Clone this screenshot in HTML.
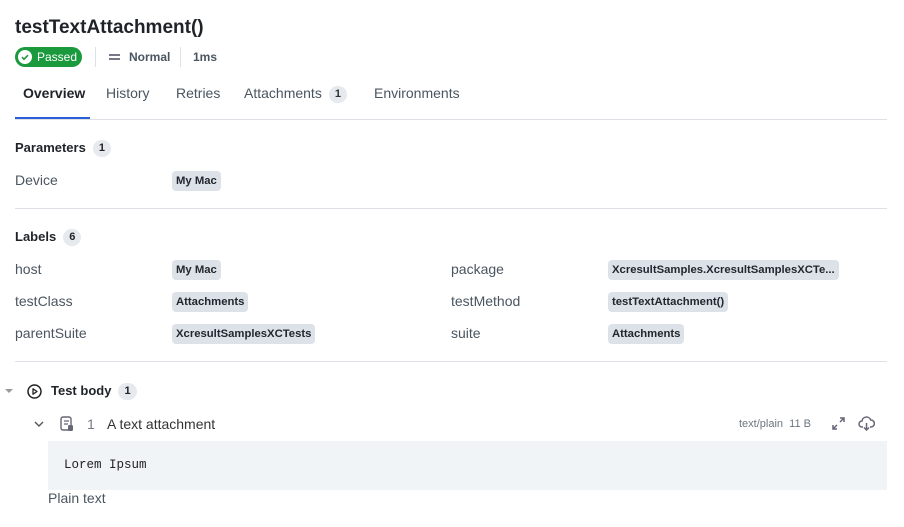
<!DOCTYPE html>
<html><head><style>
body{margin:0;width:904px;height:527px;background:#fff;font-family:"Liberation Sans",sans-serif;color:#1f2328;position:relative;overflow:hidden}
.a{position:absolute;white-space:nowrap}
.t{font-size:14px;color:#4a5560}
.tag{position:absolute;background:#dde1e8;border-radius:4px;font-size:11.3px;font-weight:bold;padding:0 4px;height:20px;line-height:20px;color:#22272e}
.hr{position:absolute;left:15px;width:872px;height:1px;background:#dde1e6}
.cnt{display:inline-block;background:#e6e9ee;border-radius:9px;font-size:11px;font-weight:bold;padding:0 6px;height:17px;line-height:17px;margin-left:7px;vertical-align:1px}
</style></head><body>
<div class="a" style="left:15px;top:17px;font-size:19px;font-weight:bold">testTextAttachment()</div>
<div class="a" style="left:15px;top:47px;height:20px;width:67px;background:#1a9a3c;border-radius:10px;color:#fff;font-size:12px;line-height:20px">
<svg style="position:absolute;left:3px;top:3px" width="14" height="14" viewBox="0 0 14 14"><circle cx="7" cy="7" r="7" fill="#fff"/><path d="M4 7.2l2 2 4-4" stroke="#1a9a3c" stroke-width="1.6" fill="none"/></svg>
<span style="position:absolute;left:22px">Passed</span></div>
<div class="a" style="left:95px;top:47px;width:1px;height:20px;background:#dde1e6"></div>
<div class="a" style="left:109px;top:54px;width:11px;height:2px;background:#778;box-shadow:0 4px 0 #778"></div>
<div class="a" style="left:129px;top:50px;font-size:12px;font-weight:bold;color:#4a5560">Normal</div>
<div class="a" style="left:180px;top:47px;width:1px;height:20px;background:#dde1e6"></div>
<div class="a" style="left:193px;top:50px;font-size:12px;font-weight:bold;color:#4a5560">1ms</div>
<div class="a" style="left:23px;top:85px;font-size:14px;font-weight:bold">Overview</div>
<div class="a t" style="left:106px;top:85px">History</div>
<div class="a t" style="left:176px;top:85px">Retries</div>
<div class="a t" style="left:244px;top:85px">Attachments<span class="cnt" style="color:#333">1</span></div>
<div class="a t" style="left:374px;top:85px">Environments</div>
<div class="hr" style="top:119px"></div>
<div class="a" style="left:15px;top:117px;width:75px;height:2px;background:#2b5fd9"></div>
<div class="a" style="left:15px;top:140px;font-size:13px;font-weight:bold">Parameters<span class="cnt">1</span></div>
<div class="a t" style="left:15px;top:172px">Device</div>
<div class="tag" style="left:172px;top:171px">My Mac</div>
<div class="hr" style="top:208px"></div>
<div class="a" style="left:15px;top:229px;font-size:13px;font-weight:bold">Labels<span class="cnt">6</span></div>
<div class="a t" style="left:15px;top:261px">host</div>
<div class="tag" style="left:172px;top:260px">My Mac</div>
<div class="a t" style="left:15px;top:293px">testClass</div>
<div class="tag" style="left:172px;top:292px">Attachments</div>
<div class="a t" style="left:15px;top:325px">parentSuite</div>
<div class="tag" style="left:172px;top:324px">XcresultSamplesXCTests</div>
<div class="a t" style="left:451px;top:261px">package</div>
<div class="tag" style="left:608px;top:260px">XcresultSamples.XcresultSamplesXCTe...</div>
<div class="a t" style="left:451px;top:293px">testMethod</div>
<div class="tag" style="left:608px;top:292px">testTextAttachment()</div>
<div class="a t" style="left:451px;top:325px">suite</div>
<div class="tag" style="left:608px;top:324px">Attachments</div>
<div class="hr" style="top:361px"></div>
<svg class="a" style="left:4px;top:387px" width="10" height="8"><path d="M1 2h8L5 6z" fill="#999"/></svg>
<svg class="a" style="left:27px;top:384px" width="15" height="15" viewBox="0 0 15 15"><circle cx="7.5" cy="7.5" r="6.5" stroke="#222" stroke-width="1.5" fill="none"/><path d="M6 4.8v5.4l4-2.7z" stroke="#222" stroke-width="1.3" fill="none" stroke-linejoin="round"/></svg>
<div class="a" style="left:51px;top:383px;font-size:13px;font-weight:bold">Test body<span class="cnt">1</span></div>
<svg class="a" style="left:34px;top:420px" width="10" height="8"><path d="M1 2l4 4 4-4" stroke="#555" stroke-width="1.4" fill="none"/></svg>
<svg class="a" style="left:60px;top:416px" width="14" height="16" viewBox="0 0 14 16"><rect x="1" y="1" width="10" height="13" rx="2" stroke="#667" stroke-width="1.4" fill="none"/><path d="M4 5h5M4 8h4" stroke="#667" stroke-width="1.3"/><rect x="8" y="9" width="5" height="6" rx="1.5" fill="#667"/></svg>
<div class="a t" style="left:87px;top:416px;color:#778">1</div>
<div class="a t" style="left:107px;top:416px;color:#333">A text attachment</div>
<div class="a" style="left:739px;top:418px;font-size:11px;color:#6b7580">text/plain&nbsp;&nbsp;11 B</div>
<svg class="a" style="left:831px;top:416px" width="15" height="15" viewBox="0 0 15 15"><path d="M9 2h4v4M13 2l-4 4M6 13H2V9M2 13l4-4" stroke="#667" stroke-width="1.5" fill="none"/></svg>
<svg class="a" style="left:858px;top:416px" width="17" height="15" viewBox="0 0 17 15"><path d="M5 11H4a3 3 0 010-6 4.5 4.5 0 018.7-1A3.5 3.5 0 0113 11h-1" stroke="#667" stroke-width="1.5" fill="none"/><path d="M8.5 7v7M6 11.5l2.5 2.5 2.5-2.5" stroke="#667" stroke-width="1.5" fill="none"/></svg>
<div class="a" style="left:48px;top:441px;width:839px;height:49px;background:#f1f4f7"></div>
<div class="a" style="left:64px;top:458px;font-family:'Liberation Mono',monospace;font-size:12.5px;color:#222">Lorem Ipsum</div>
<div class="a t" style="left:48px;top:490px;color:#4a5560">Plain text</div>
</body></html>
